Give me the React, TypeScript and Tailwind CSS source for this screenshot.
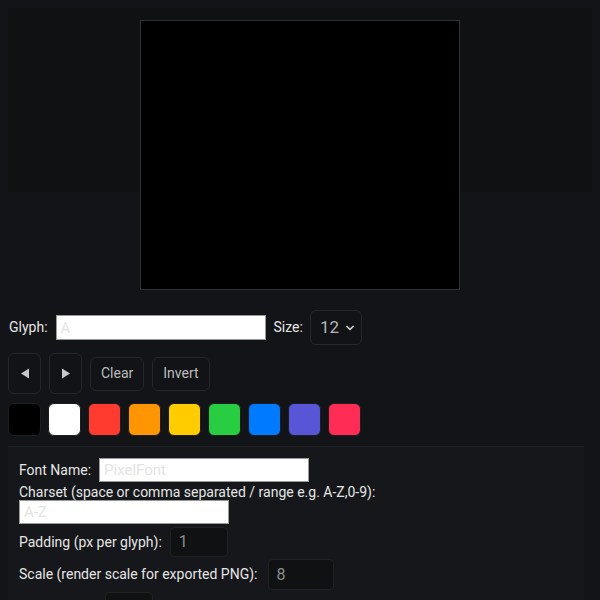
import { ChevronDown } from "lucide-react";

const swatches = [
  "#000000",
  "#ffffff",
  "#ff3b30",
  "#ff9500",
  "#ffcc00",
  "#28cd41",
  "#007aff",
  "#5856d6",
  "#ff2d55",
];

const App = () => {
  return (
    <div
      className="min-h-[600px] w-[600px] overflow-hidden bg-[#121417] p-2 text-[14px] text-[#e6e6e6]"
      style={{ fontFamily: "Roboto, 'Liberation Sans', sans-serif" }}
    >
      {/* Preview area */}
      <div className="bg-[linear-gradient(#0f1113_0,#0f1113_184px,transparent_184px)] pt-3">
        <div className="mx-auto h-[270px] w-[320px] border border-[#2e3034] bg-black" />
      </div>

      {/* Glyph + size */}
      <div className="mt-5 flex h-[35px] items-center">
        <span className="ml-px">Glyph:</span>
        <input
          type="text"
          placeholder="A"
          className="ml-2 h-[25px] w-[210px] border border-[#999] bg-white px-1 text-[15px] placeholder:text-[#e4e4e4]"
        />
        <span className="ml-2">Size:</span>
        <div className="ml-[7px] flex h-[35px] w-[52px] items-center justify-between rounded-md border border-[#26282c] bg-[#111316] pl-[9px] pr-[5px] text-[17px] text-[#b5b5b5]">
          <span>12</span>
          <ChevronDown size={12} strokeWidth={3.5} className="text-[#cfcfcf]" />
        </div>
      </div>

      {/* Tool buttons */}
      <div className="mt-2 flex items-center gap-2">
        <button className="flex h-[41px] w-[33px] items-center justify-center rounded-md border border-[#24262a] bg-[#111316]">
          <svg width="10" height="11" viewBox="0 0 10 11">
            <path d="M9 0.5 L1 5.5 L9 10.5 Z" fill="#c8c8c8" />
          </svg>
        </button>
        <button className="flex h-[41px] w-[33px] items-center justify-center rounded-md border border-[#24262a] bg-[#111316]">
          <svg width="10" height="11" viewBox="0 0 10 11">
            <path d="M1 0.5 L9 5.5 L1 10.5 Z" fill="#c8c8c8" />
          </svg>
        </button>
        <button className="h-[34px] rounded-md border border-[#24262a] bg-[#111316] px-[10px] text-[#bdbdbd]">
          Clear
        </button>
        <button className="h-[34px] rounded-md border border-[#24262a] bg-[#111316] px-[10px] text-[#bdbdbd]">
          Invert
        </button>
      </div>

      {/* Palette */}
      <div className="mt-[9px] flex gap-[7px]">
        {swatches.map((c) => (
          <div
            key={c}
            className="h-[33px] w-[33px] rounded-md border border-[#1c1e21]"
            style={{ backgroundColor: c }}
          />
        ))}
      </div>

      {/* Export settings */}
      <div className="mt-[10px] w-[576px] border-t border-[#1e2024] bg-[#15171a] px-[11px] pt-[11px] pb-6">
        <div className="flex h-[24px] items-center">
          <span>Font Name:</span>
          <input
            type="text"
            placeholder="PixelFont"
            className="ml-2 h-[24px] w-[210px] border border-[#999] bg-white px-1 text-[15px] placeholder:text-[#e4e4e4]"
          />
        </div>
        <div className="mt-[2px] leading-[16px]">
          Charset (space or comma separated / range e.g. A-Z,0-9):
        </div>
        <input
          type="text"
          placeholder="A-Z"
          className="block h-[24px] w-[210px] border border-[#999] bg-white px-1 text-[15px] placeholder:text-[#e4e4e4]"
        />
        <div className="mt-[3px] flex h-[30px] items-center">
          <span>Padding (px per glyph):</span>
          <div className="ml-2 flex h-[30px] w-[58px] items-center rounded border border-[#1f2125] bg-[#0f1113] px-2 text-[16px] text-[#8c8c8c]">
            1
          </div>
        </div>
        <div className="mt-[2px] flex h-[31px] items-center">
          <span>Scale (render scale for exported PNG):</span>
          <div className="ml-[10px] flex h-[31px] w-[66px] items-center rounded border border-[#1f2125] bg-[#0f1113] px-2 text-[16px] text-[#8c8c8c]">
            8
          </div>
        </div>
        <div className="mt-[2px] flex h-[31px] items-center">
          <span>Background:</span>
          <div className="ml-2 h-[31px] w-[48px] rounded border border-[#1f2125] bg-[#0f1113]" />
        </div>
      </div>
    </div>
  );
};

export default App;
